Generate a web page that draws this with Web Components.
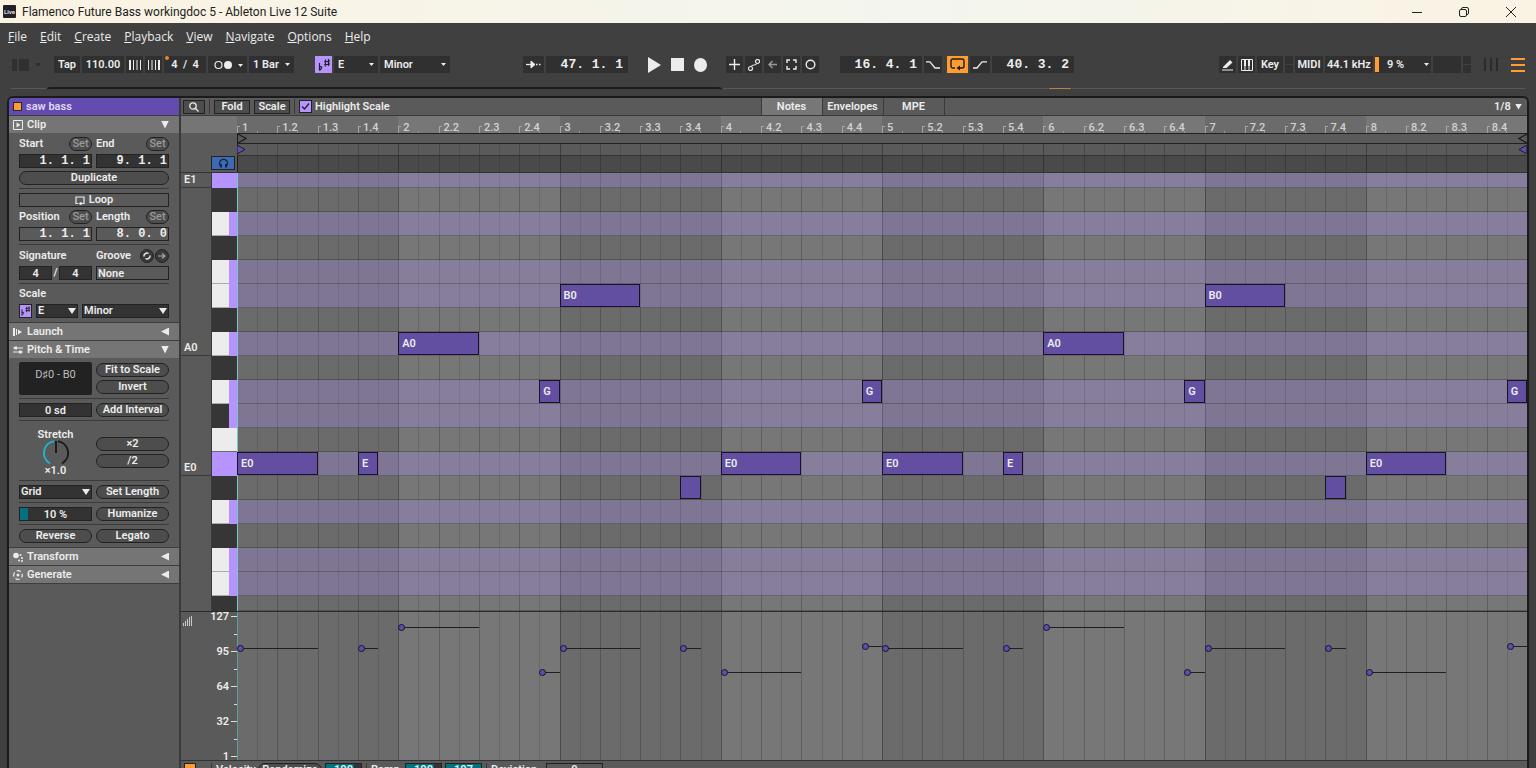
<!DOCTYPE html>
<html lang="en">
<head>
<meta charset="utf-8">
<title>Flamenco Future Bass workingdoc 5 - Ableton Live 12 Suite</title>
<style>
  body {
    margin: 0;
    height: 100vh;
    overflow: hidden;
    background: #404040;
    color: #ececec;
    font: 600 11px/14px Roboto, "Liberation Sans", sans-serif;
  }
</style>
</head>
<body>
<live-app></live-app>

<script>
// styles shared by every element that holds controls
const controls = `
  * { box-sizing: border-box; }
  button, input, select {
    margin: 0;
    padding: 0;
    border: 0;
    border-radius: 0;
    background: none;
    color: inherit;
    font: inherit;
    min-width: 0;
    appearance: none;
    outline: none;
  }
  svg { display: block; }
  svg:not([fill]) { fill: none; }
  svg:not([stroke]) { stroke: currentColor; }
  .time { font: 700 12px/12px "Liberation Mono", monospace; text-align: right; }
`

const scaleIcon = `
  <svg width="14" height="14" viewBox="0 0 14 14" stroke="#222" stroke-width="1.2">
    <path d="M2.500 5v7.500M2.500 9c3-1.500 3 1 0 3.500M8.500 1.500v7M11.500 1v7M7 4l6-1M7 6.800l6-1"/>
  </svg>`

class BaseElement extends HTMLElement {
  constructor() {
    super()
    this.attachShadow({ mode: 'open' })
  }

  connectedCallback() {
    this.shadowRoot.innerHTML = `<style>${controls}</style>${this.html}`
  }
}

class LiveApp extends BaseElement {
  get html() {
    return `
      <style>
        :host { display: flex; flex-direction: column; height: 100vh; }
        .overview {
          display: flex;
          height: 8px;
          margin: 15px 11px 0;
          gap: 1px;
        }
        .overview i { height: 1px; background: #585858; }
        .overview i:nth-child(1) { width: 35px; }
        .overview i:nth-child(2) {
          width: 675px;
          height: 3px;
          border-top: 2px solid #1c1c1c;
          border-radius: 3px 3px 0 0;
          margin-top: -1px;
          background: none;
        }
        .overview i:nth-child(3) { flex: 1; }
        .overview i:nth-child(4) { width: 22px; background: #b9863f; }
        .overview i:nth-child(5) { width: 453px; }
        main {
          flex: 1;
          min-height: 0;
          display: flex;
          margin: 0 7px;
          border: 2px solid #1b1b1b;
          border-bottom: 0;
          border-radius: 6px 6px 0 0;
          background: #5a5a5a;
          overflow: hidden;
        }
        note-editor { flex: 1; min-width: 0; }
      </style>
      <title-bar>Flamenco Future Bass workingdoc 5 - Ableton Live 12 Suite</title-bar>
      <menu-bar></menu-bar>
      <transport-bar></transport-bar>
      <div class="overview"><i></i><i></i><i></i><i></i><i></i></div>
      <main>
        <clip-panel></clip-panel>
        <note-editor></note-editor>
      </main>
    `
  }
}

class TitleBar extends BaseElement {
  get html() {
    return `
      <style>
        :host {
          display: flex;
          align-items: center;
          flex: none;
          height: 23px;
          padding: 0 2px 0 3px;
          background: linear-gradient(90deg, #fbf3e2, #f3f5ee 60%, #faf3e3);
          color: #222;
          font: 400 12px/16px Roboto, "Noto Sans", sans-serif;
        }
        .logo {
          width: 13px;
          height: 13px;
          margin-right: 6px;
          border-radius: 1px;
          background: #1f2028;
          color: #ddd;
          font: 700 6px/13px Roboto, sans-serif;
          text-align: center;
        }
        h1 { flex: 1; margin: 0; font: inherit; }
        button { width: 47px; height: 23px; display: grid; place-items: center; }
      </style>
      <span class="logo">Live</span>
      <h1><slot></slot></h1>
      <button aria-label="Minimize"><svg width="10" height="10"><path d="M0 5.500h10"/></svg></button>
      <button aria-label="Restore">
        <svg width="10" height="10"><rect x=".5" y="2.500" width="7" height="7" rx="1.500"/><path d="M2.500 2.500V2a1.500 1.500 0 0 1 1.500-1.500h4A1.500 1.500 0 0 1 9.500 2v4A1.500 1.500 0 0 1 8 7.500h-.5"/></svg>
      </button>
      <button aria-label="Close"><svg width="10" height="10"><path d="M0 0l10 10M10 0L0 10"/></svg></button>
    `
  }
}

class MenuBar extends BaseElement {
  get html() {
    const items = ['File', 'Edit', 'Create', 'Playback', 'View', 'Navigate', 'Options', 'Help']
    return `
      <style>
        :host {
          display: flex;
          flex: none;
          align-items: center;
          gap: 13px;
          height: 27px;
          padding-left: 8px;
          font: 400 12px/16px "Open Sans", "Noto Sans", sans-serif;
        }
        button::first-letter { text-decoration: underline; }
      </style>
      ${items.map(item => `<button>${item}</button>`).join('')}
    `
  }
}

class DropDown extends BaseElement {
  get html() {
    return `
      <style>
        :host { display: grid; align-items: center; }
        select, i { grid-area: 1 / 1; }
        select { width: 100%; height: 100%; padding-left: var(--indent, 4px); }
        i {
          justify-self: end;
          width: var(--arrow, 6px);
          height: var(--arrow-height, 4px);
          margin-right: var(--arrow-gap, 3px);
          background: currentColor;
          clip-path: polygon(0 0, 100% 0, 50% 100%);
          pointer-events: none;
        }
      </style>
      <select aria-label="${this.getAttribute('label')}"><option>${this.getAttribute('value')}</option></select>
      <i></i>
    `
  }
}

class TransportBar extends BaseElement {
  get html() {
    return `
      <style>
        :host {
          display: flex;
          flex: none;
          align-items: center;
          height: 17px;
          margin-top: 6px;
          padding: 0 11px 0 12px;
        }
        .group { display: flex; gap: 2px; }
        .group > * { height: 17px; background: #303030; }
        .group > button, .group > label { display: grid; place-items: center; }
        .group > input { text-align: center; }
        .group > .time { width: 82px; padding-right: 5px; font-size: 13px; text-align: right; }
        .group > .bare { background: none; }
        drop-down { --arrow: 5px; --arrow-height: 3px; --arrow-gap: 4px; }
        .signature { position: relative; }
        .signature::before {
          content: '';
          position: absolute;
          top: 0;
          left: 1px;
          width: 4px;
          height: 4px;
          border-radius: 50%;
          background: #e8862c;
        }
        .signature input { width: 42px; text-align: center; }
        .group > .on { background: #b594ff; }
        .group > .loop { background: #ff9d33; color: #1d1d1d; margin: 0 0 0 3px; }
        .group > .split { width: 8px; background: linear-gradient(#303030 8px, #404040 8px, #404040 9px, #303030 9px); }
        .cpu { display: flex; align-items: center; width: 56px; }
        .cpu i { width: 4px; height: 15px; margin-right: 8px; background: #ff9d33; }
        .cpu drop-down { flex: 1; height: 17px; --indent: 0px; --arrow-gap: 2px; }
      </style>
      <div class="group">
        <button class="bare" aria-label="Browser"><svg width="40" height="17" stroke="none" fill="#303030"><path d="M0 3h5v12H0zM7 3h10v12H7zM23 7h6l-3 4z"/></svg></button>
        <button style="width:26px">Tap</button>
        <input style="width:42px" value="110.00" aria-label="Tempo">
        <button style="width:17px" aria-label="Nudge down"><svg width="12" height="10"><path stroke-width="2" d="M1 0v10"/><path d="M4.500 0v10M8 0v10M11.500 0v10"/></svg></button>
        <button style="width:17px" aria-label="Nudge up"><svg width="12" height="10"><path d="M.5 0v10M4 0v10M7.500 0v10"/><path stroke-width="2" d="M11 0v10"/></svg></button>
        <label class="signature"><input value="4  /  4" aria-label="Time signature"></label>
        <button style="width:39px" aria-label="Metronome"><svg width="30" height="10"><circle cx="5.500" cy="5" r="3.500" stroke-width="1.200"/><circle cx="15" cy="5" r="4" fill="currentColor" stroke="none"/><path d="M25 4h5l-2.500 3z" fill="currentColor" stroke="none"/></svg></button>
        <drop-down style="width:45px" label="Quantization" value="1 Bar"></drop-down>
      </div>
      <div class="group" style="margin-left:21px">
        <button class="on" style="width:17px" aria-label="Scale mode">${scaleIcon}</button>
        <drop-down style="width:44px" label="Root note" value="E"></drop-down>
        <drop-down style="width:70px" label="Scale name" value="Minor"></drop-down>
      </div>
      <div class="group" style="margin-left:73px">
        <button style="width:21px" aria-label="Follow"><svg width="15" height="9"><path stroke-width="1.300" d="M0 4.500h7"/><path d="M5 1l4 3.500L5 8z" fill="currentColor"/><path stroke-width="1.500" stroke-dasharray="1.500 1.500" d="M10 4.500h5"/></svg></button>
        <input class="time" value="47. 1. 1" aria-label="Arrangement position">
      </div>
      <div class="group" style="margin-left:20px;gap:10px">
        <button class="bare" aria-label="Play"><svg width="13" height="16" stroke="none" fill="currentColor"><path d="M0 0l13 8-13 8z"/></svg></button>
        <button class="bare" aria-label="Stop"><svg width="13" height="13" stroke="none" fill="currentColor"><path d="M0 0h13v13H0z"/></svg></button>
        <button class="bare" aria-label="Record"><svg width="13" height="14" stroke="none" fill="currentColor"><ellipse cx="6.500" cy="7" rx="6.500" ry="7"/></svg></button>
      </div>
      <div class="group" style="margin-left:19px">
        <button style="width:17px" aria-label="Overdub"><svg width="11" height="11"><path stroke-width="1.400" d="M5.500 0v11M0 5.500h11"/></svg></button>
        <button style="width:17px" aria-label="Automation arm"><svg width="12" height="12" stroke-width="1.200"><circle cx="2.500" cy="9.500" r="2"/><circle cx="9.500" cy="2.500" r="2"/><path d="M3.500 7.500c.5-3 4.500 0 5-3"/></svg></button>
        <button style="width:17px" aria-label="Re-enable automation"><svg width="9" height="9" stroke="#999" stroke-width="1.500"><path d="M9 4.500H1M4.500 1L1 4.500 4.500 8"/></svg></button>
        <button style="width:17px" aria-label="Capture"><svg width="11" height="11" stroke-width="1.400"><path d="M1 4V1h3M7 1h3v3M10 7v3H7M4 10H1V7"/></svg></button>
        <button style="width:17px" aria-label="Session record"><svg width="11" height="11" stroke-width="1.400"><circle cx="5.500" cy="5.500" r="4.300"/></svg></button>
      </div>
      <div class="group" style="margin-left:21px">
        <input class="time" value="16. 4. 1" aria-label="Loop start">
        <button style="width:18px" aria-label="Punch in"><svg width="14" height="8" stroke-width="1.300"><path d="M0 .8h4L9 7h5"/></svg></button>
        <button class="loop" style="width:21px" aria-label="Loop"><svg width="15" height="13" stroke-width="1.400"><path d="M5 10H3a2 2 0 0 1-2-2V3a2 2 0 0 1 2-2h9a2 2 0 0 1 2 2v5a2 2 0 0 1-2 2H8"/><path d="M10 7.500v5L6.500 10z" fill="currentColor" stroke="none"/></svg></button>
        <button style="width:20px" aria-label="Punch out"><svg width="14" height="8" stroke-width="1.300"><path d="M0 7h4L9 .8h5"/></svg></button>
        <input class="time" value="40. 3. 2" aria-label="Loop length">
      </div>
      <div class="group" style="margin-left:auto">
        <button style="width:17px" aria-label="Draw mode"><svg width="12" height="12"><path d="M1 8l7-7 2.500 2.500-6 5.500H1z" fill="currentColor" stroke="none"/><path d="M0 11h11"/></svg></button>
        <button style="width:17px" aria-label="Computer keyboard"><svg width="12" height="12"><path d="M.5.5h11v11H.5zM4 0v12M8 0v12" /><path stroke-width="2" d="M4 0v7M8 0v7"/></svg></button>
        <button style="width:26px">Key</button>
        <span class="split"></span>
        <button style="width:28px">MIDI</button>
        <button style="width:48px">44.1 kHz</button>
        <div class="cpu"><i></i><drop-down label="CPU load" value="9 %"></drop-down></div>
        <span style="width:28px"></span>
        <span class="split"></span>
        <button class="bare" style="width:36px" aria-label="Session view"><svg width="14" height="13" stroke="#2b2b2b" stroke-width="2"><path d="M1 0v13M7 0v13M13 0v13"/></svg></button>
        <button class="bare" style="width:14px" aria-label="Arrangement view"><svg width="14" height="14" stroke="#ff9d33" stroke-width="2"><path d="M0 1h14M0 7h14M0 13h14"/></svg></button>
      </div>
    `
  }
}

class PanelSection extends BaseElement {
  get html() {
    const open = this.hasAttribute('open')
    return `
      <style>
        :host { display: block; }
        header {
          display: flex;
          align-items: center;
          gap: 4px;
          height: 18px;
          padding: 0 10px 0 4px;
          border-top: 1px solid #3d3d3d;
          background: #757575;
        }
        h2 { flex: 1; margin: 0; font: inherit; }
        header button { width: 8px; height: 8px; background: #ececec; clip-path: polygon(0 50%, 100% 0, 100% 100%); }
        header .open { clip-path: polygon(0 0, 100% 0, 50% 100%); }
        .body { display: ${open ? 'block' : 'none'}; padding: 1px 10px 4px; }
      </style>
      <header>
        <slot name="icon"></slot>
        <h2>${this.getAttribute('heading')}</h2>
        <button class="${open ? 'open' : ''}" aria-label="Toggle ${this.getAttribute('heading')}"></button>
      </header>
      <div class="body"><slot></slot></div>
    `
  }
}

class ClipPanel extends BaseElement {
  get html() {
    return `
      <style>
        :host {
          flex: none;
          display: block;
          width: 172px;
          border-right: 2px solid #3a3a3a;
        }
        .name {
          display: flex;
          align-items: center;
          gap: 4px;
          height: 17px;
          padding-left: 4px;
          background: #634bb0;
          color: #e0d8f5;
        }
        .name i { width: 9px; height: 9px; border: 1px solid #2a2a2a; background: #ff9d33; }
        .row { display: grid; grid-template-columns: 1fr 1fr; column-gap: 4px; align-items: center; height: 14px; }
        .labels { height: 20px; }
        .tall { height: 21px; }
        .labels span, .labels > label { display: flex; justify-content: space-between; align-items: center; }
        .row > input, .row > button, .full, .sig input {
          width: 100%;
          height: 14px;
          border: 1px solid #222;
        }
        input { background: #333; text-align: center; line-height: 12px; }
        input.time { padding-right: 1px; text-align: right; }
        input.flat, .loop { background: #5a5a5a; }
        .pill, .set { border: 1px solid #222; border-radius: 7px; background: #4d4d4d; line-height: 12px; }
        .full { display: flex; align-items: center; justify-content: center; gap: 4px; }
        .set { width: 23px; height: 14px; color: #999; font-weight: 500; }
        .round { width: 14px; height: 14px; display: grid; place-items: center; border: 1px solid #222; border-radius: 50%; background: #3a3a3a; }
        .groove-buttons { display: flex; gap: 1px; }
        hr { height: 1px; margin: 3px 0 4px; border: 0; background: #3a3a3a; }
        hr.tight { margin-bottom: 0; }
        drop-down {
          height: 14px;
          border: 1px solid #222;
          background: #333;
          line-height: 12px;
          --indent: 1px;
          --arrow: 8px;
          --arrow-height: 6px;
          --arrow-gap: 1px;
        }
        .sig { display: flex; align-items: center; gap: 1px; }
        .sig input { flex: 1; }
        .scale { display: grid; grid-template-columns: 13px 42px 1fr; column-gap: 4px; }
        .scale button { height: 14px; border: 1px solid #222; background: #b594ff; }
        .scale svg { width: 11px; height: 12px; }
        .range {
          display: grid;
          grid-template-columns: 1fr 1fr;
          column-gap: 4px;
          align-items: center;
          padding-top: 3px;
        }
        .range output { height: 33px; padding-top: 6px; border-radius: 2px; background: #222; color: #bdbdbd; text-align: center; font-weight: 400; }
        .stack { display: grid; gap: 3px; }
        .stack button { height: 14px; }
        .stretch { display: grid; grid-template-columns: 1fr 1fr; column-gap: 4px; align-items: center; height: 55px; }
        .dial { display: grid; justify-items: center; grid-template-rows: 14px 22px 14px; align-items: center; }
        .percent { background: linear-gradient(90deg, #04717f 8px, #333 8px); }
        .end { border-bottom: 1px solid #3d3d3d; }
      </style>
      <div class="name"><i></i>saw bass</div>
      <panel-section heading="Clip" open>
        <svg slot="icon" width="10" height="10"><path d="M.5.5h9v9h-9z"/><path d="M3.500 2.500l4 2.500-4 2.500z" fill="currentColor" stroke="none"/></svg>
        <div class="row labels">
          <span><label for="start">Start</label><button class="set">Set</button></span>
          <span><label for="end">End</label><button class="set">Set</button></span>
        </div>
        <div class="row">
          <input id="start" class="time" value="1. 1. 1">
          <input id="end" class="time" value="9. 1. 1">
        </div>
        <button class="pill full" style="margin-top:3px">Duplicate</button>
        <hr>
        <button class="loop full"><svg width="10" height="9"><path stroke-width="1.200" d="M3 7.500H1V1h8v6.500H6"/><path d="M6.500 5.500v4l-3-2z" fill="currentColor" stroke="none"/></svg>Loop</button>
        <div class="row labels">
          <span><label for="position">Position</label><button class="set">Set</button></span>
          <span><label for="length">Length</label><button class="set">Set</button></span>
        </div>
        <div class="row">
          <input id="position" class="time flat" value="1. 1. 1">
          <input id="length" class="time flat" value="8. 0. 0">
        </div>
        <hr class="tight">
        <div class="row labels tall">
          <label for="numerator">Signature</label>
          <span><label for="groove">Groove</label>
            <span class="groove-buttons">
              <button class="round" aria-label="Hot-swap groove"><svg width="8" height="8" stroke-width="1.400"><path d="M1 4.500A3 3 0 0 1 5.500 1.500M7 3.500A3 3 0 0 1 2.500 6.500"/></svg></button>
              <button class="round" aria-label="Commit groove"><svg width="8" height="8" stroke="#aaa" stroke-width="1.200"><path d="M0 4h7M4 1.500L7 4 4 6.500"/></svg></button>
            </span>
          </span>
        </div>
        <div class="row">
          <div class="sig"><input id="numerator" value="4">/<input value="4" aria-label="Denominator"></div>
          <input id="groove" class="flat" style="text-align:left;padding-left:1px" value="None">
        </div>
        <hr class="tight">
        <div class="row labels">Scale</div>
        <div class="scale">
          <button aria-label="Use scale">${scaleIcon}</button>
          <drop-down label="Root note" value="E"></drop-down>
          <drop-down label="Scale name" value="Minor"></drop-down>
        </div>
      </panel-section>
      <panel-section heading="Launch">
        <svg slot="icon" width="10" height="10" fill="currentColor" stroke="none"><path d="M0 1h2v8H0zM3 2h1v6H3zM5 2.500L9 5 5 7.500z"/></svg>
      </panel-section>
      <panel-section heading="Pitch &amp; Time" open>
        <svg slot="icon" width="10" height="10" stroke-width="1.200"><path d="M0 3h10M0 7h10"/><path d="M1.500 1.500h2.500v3H1.500zM6 5.500h2.500v3H6z" fill="currentColor" stroke="none"/></svg>
        <div class="range">
          <output>D♯0 - B0</output>
          <div class="stack"><button class="pill">Fit to Scale</button><button class="pill">Invert</button></div>
        </div>
        <hr>
        <div class="row"><input value="0 sd" aria-label="Transpose"><button class="pill">Add Interval</button></div>
        <hr>
        <div class="stretch">
          <div class="dial">
            <span>Stretch</span>
            <svg width="28" height="26" stroke-width="2"><path stroke="#1c1c1c" d="M16 1.200A12 12 0 0 1 20 23.500"/><path stroke="#1fb4c8" d="M12 1.200A12 12 0 0 0 8 23.500"/><path stroke="#1c1c1c" d="M14 1v12"/></svg>
            <span>×1.0</span>
          </div>
          <div class="stack"><button class="pill">×2</button><button class="pill">/2</button></div>
        </div>
        <hr style="margin-top:0">
        <div class="row"><drop-down label="Quantize to" value="Grid"></drop-down><button class="pill">Set Length</button></div>
        <hr>
        <div class="row"><input class="percent" value="10 %" aria-label="Humanize amount"><button class="pill">Humanize</button></div>
        <hr>
        <div class="row"><button class="pill">Reverse</button><button class="pill">Legato</button></div>
      </panel-section>
      <panel-section heading="Transform">
        <svg slot="icon" width="10" height="10" fill="currentColor" stroke="none"><circle cx="3" cy="3.500" r="2.800"/><circle cx="7.500" cy="3" r="1"/><circle cx="9" cy="6" r="1"/><circle cx="6" cy="8.500" r="1"/><circle cx="9" cy="9" r="1"/></svg>
      </panel-section>
      <panel-section class="end" heading="Generate">
        <svg slot="icon" width="10" height="10" stroke-width="1.200"><circle cx="5" cy="5" r="4.300" stroke-dasharray="4.500 2.250" stroke-dashoffset="2"/><circle cx="5" cy="5" r="1.500" fill="currentColor" stroke="none"/></svg>
      </panel-section>
    `
  }
}

// eight bars of eighth-note cells, stretched over whatever holds it
class TimeGrid extends BaseElement {
  get html() {
    const bar = `<div>${'<i></i>'.repeat(8)}</div>`
    return `
      <style>
        :host { display: grid; grid-template-columns: repeat(8, minmax(0, 1fr)); }
        div { display: grid; grid-template-columns: repeat(8, minmax(0, 1fr)); background: var(--even-bar, none); }
        div:nth-of-type(odd) { background: var(--odd-bar, none); }
        i { border-left: 1px solid rgba(0, 0, 0, .12); }
        i:nth-child(odd) { border-color: rgba(0, 0, 0, .2); }
        i:first-child { border-color: rgba(0, 0, 0, .32); }
        div:first-of-type i:first-child { border-color: var(--playhead, #1d1d1d); }
      </style>
      ${bar.repeat(8)}
    `
  }
}

// start and length in eighths, row counted from the top of the roll
const notes = [
  { name: 'E0', row: 13, start: 0, length: 4, velocity: 98 },
  { name: 'E', row: 13, start: 6, length: 1, velocity: 98 },
  { name: 'A0', row: 8, start: 8, length: 4, velocity: 117 },
  { name: 'G', row: 10, start: 15, length: 1, velocity: 77 },
  { name: 'B0', row: 6, start: 16, length: 4, velocity: 98 },
  { name: '', row: 14, start: 22, length: 1, velocity: 98 },
  { name: 'E0', row: 13, start: 24, length: 4, velocity: 77 },
  { name: 'G', row: 10, start: 31, length: 1, velocity: 100 },
  { name: 'E0', row: 13, start: 32, length: 4, velocity: 98 },
  { name: 'E', row: 13, start: 38, length: 1, velocity: 98 },
  { name: 'A0', row: 8, start: 40, length: 4, velocity: 117 },
  { name: 'G', row: 10, start: 47, length: 1, velocity: 77 },
  { name: 'B0', row: 6, start: 48, length: 4, velocity: 98 },
  { name: '', row: 14, start: 54, length: 1, velocity: 98 },
  { name: 'E0', row: 13, start: 56, length: 4, velocity: 77 },
  { name: 'G', row: 10, start: 63, length: 1, velocity: 100 }
]

// top to bottom, E1 down to A#-1
const keys = [
  'root', 'black', 'white scale', 'black', 'white scale', 'white scale', 'black', 'white scale',
  'black', 'white scale', 'black scale', 'white', 'root', 'black', 'white scale', 'black',
  'white scale', 'white scale', 'black'
]
const keyLabels = { 0: 'E1', 7: 'A0', 12: 'E0' }

class PianoRoll extends BaseElement {
  get html() {
    return `
      <style>
        :host {
          display: grid;
          grid-template-columns: 31px 25px 1fr;
          border-bottom: 1px solid #2b2b2b;
        }
        .rows { display: grid; grid-template-rows: 15px repeat(17, 24px) 15px; }
        .labels { border-right: 1px solid #3a3a3a; }
        .labels span { display: flex; align-items: flex-end; padding-left: 3px; }
        .labels span.named { border-bottom: 1px solid #3a3a3a; }
        .keys i { border-bottom: 1px solid #6a6a6a; }
        .keys .white { background: #ececec; }
        .keys .black { background: #363636; border-color: #363636; }
        .keys .root { background: #b594ff; border-color: #b594ff; }
        .keys .scale { border-right: 8px solid #b594ff; border-bottom: 0; box-shadow: inset 0 -1px #aaa; }
        .keys .black.scale { box-shadow: none; }
        .canvas { display: grid; }
        .canvas > * { grid-area: 1 / 1; }
        .lanes i { border-bottom: 1px solid rgba(0, 0, 0, .22); }
        .lanes .scale, .lanes .root { background: rgba(181, 148, 255, .27); }
        time-grid { --odd-bar: #6b6b6b; --even-bar: #777; }
        .notes { grid-template-columns: repeat(64, minmax(0, 1fr)); box-shadow: inset 1px 0 #79c8cf; }
        .note {
          margin-bottom: 1px;
          padding-left: 3px;
          border: 1px solid #171321;
          background: #634fa2;
          text-align: left;
          overflow: hidden;
        }
      </style>
      <div class="rows labels">
        ${keys.map((key, i) => `<span class="${keyLabels[i] ? 'named' : ''}">${keyLabels[i] || ''}</span>`).join('')}
      </div>
      <div class="rows keys">${keys.map(key => `<i class="${key}"></i>`).join('')}</div>
      <div class="canvas">
        <time-grid></time-grid>
        <div class="rows lanes">${keys.map(key => `<i class="${key}"></i>`).join('')}</div>
        <div class="rows notes">
          ${notes.map(note => `
            <button class="note" style="grid-area: ${note.row} / ${note.start + 1} / span 1 / span ${note.length}">${note.name}</button>
          `).join('')}
        </div>
      </div>
    `
  }
}

class VelocityLane extends BaseElement {
  get html() {
    const ticks = ['127', '', '95', '', '64', '', '32', '', '1']
    return `
      <style>
        :host {
          display: grid;
          grid-template-columns: 56px 1fr;
          height: 149px;
          border-bottom: 1px solid #333;
        }
        aside { display: flex; padding: 4px 0 3px 2px; justify-content: space-between; }
        .ticks { display: flex; flex-direction: column; justify-content: space-between; }
        .ticks span {
          display: flex;
          align-items: center;
          justify-content: flex-end;
          gap: 2px;
          height: 1px;
        }
        .ticks span::after { content: ''; width: 3px; height: 1px; background: #ddd; }
        .ticks .major::after { width: 6px; }
        .lane { display: grid; }
        .lane > * { grid-area: 1 / 1; }
        time-grid { --odd-bar: #6b6b6b; --even-bar: #777; --playhead: #5c9da1; }
        .stalks { position: relative; margin: 4px 0; }
        .stalks i { position: absolute; height: 1px; background: #1f1f1f; }
        .stalks i::before {
          content: '';
          position: absolute;
          top: -3px;
          left: 0;
          width: 5px;
          height: 5px;
          border: 1px solid #17131f;
          border-radius: 50%;
          background: #634bb0;
        }
      </style>
      <aside>
        <svg width="9" height="10" stroke="#c8c8c8"><path d="M.5 7v3M2.500 5v5M4.500 3v7M6.500 1v9M8.500 0v10"/></svg>
        <div class="ticks">${ticks.map(tick => `<span class="${tick ? 'major' : ''}">${tick}</span>`).join('')}</div>
      </aside>
      <div class="lane">
        <time-grid></time-grid>
        <div class="stalks">
          ${notes.map(note => `
            <i style="left: ${note.start / 64 * 100}%; width: ${note.length / 64 * 100}%; top: ${(127 - note.velocity) / 126 * 100}%"></i>
          `).join('')}
        </div>
      </div>
    `
  }
}

class BeatRuler extends BaseElement {
  get html() {
    let labels = ''
    for (let bar = 1; bar <= 8; bar++) {
      for (let beat = 1; beat <= 4; beat++) {
        const shade = bar % 2 ? 'odd' : 'even'
        labels += `<span class="${shade}">${beat === 1 ? bar : `${bar}.${beat}`}</span>`
      }
    }
    return `
      <style>
        :host { display: grid; grid-template-columns: repeat(32, minmax(0, 1fr)); height: 17px; color: #d2d2d2; font-weight: 500; }
        span {
          display: flex;
          align-items: flex-end;
          gap: 2px;
          height: 17px;
          line-height: 11px;
          background: linear-gradient(#999, #999) 50% 100% / 1px 2px no-repeat #777;
        }
        span::before { content: ''; width: 2px; height: 6px; border: solid #a5a5a5; border-width: 1px 0 0 1px; }
        .odd { background-color: #6b6b6b; }
      </style>
      ${labels}
    `
  }
}

class NoteEditor extends BaseElement {
  get html() {
    return `
      <style>
        :host { display: block; }
        .toolbar {
          display: grid;
          grid-template-columns: 1fr auto 1fr;
          height: 18px;
          padding-right: 3px;
          border-bottom: 1px solid #3a3a3a;
        }
        .tools { display: flex; align-items: center; gap: 4px; padding-left: 2px; }
        .tools button { width: 36px; height: 14px; border: 1px solid #222; background: #4d4d4d; line-height: 12px; }
        .tools .search { width: 22px; display: grid; place-items: center; }
        .tools hr { width: 1px; height: 15px; margin: 0; border: 0; background: #3a3a3a; }
        .tools label { display: flex; align-items: center; gap: 3px; }
        .check { display: grid; }
        .check > * { grid-area: 1 / 1; width: 13px; height: 13px; }
        .check input { border: 1px solid #222; background: #b594ff; }
        .check svg { pointer-events: none; }
        nav { display: flex; border-left: 1px solid #3a3a3a; }
        nav button { width: 61px; border-right: 1px solid #3a3a3a; }
        nav .active { background: #777; }
        .toolbar drop-down { justify-self: end; width: 34px; --arrow: 7px; --arrow-height: 6px; --arrow-gap: 2px; }
        .head { display: grid; grid-template-columns: 56px 1fr; border-bottom: 1px solid #333; }
        .corner { display: flex; flex-direction: column; }
        .corner::before { content: ''; height: 17px; background: #757575; }
        .corner button { display: grid; place-items: center; width: 24px; height: 14px; margin: auto 2px 2px auto; border: 1px solid #222; background: #3d69b5; color: #16243f; }
        .bar { display: flex; align-items: center; border-top: 1px solid #222; height: 10px; justify-content: space-between; }
        .loop-bar { border-left: 1px solid #1d1d1d; }
        .markers, .scrub { display: grid; border-top: 1px solid #222; }
        .markers { height: 12px; }
        .markers > * { grid-area: 1 / 1; }
        .markers div { display: flex; justify-content: space-between; align-items: center; }
        .scrub { height: 17px; background: #4a4a4a; border-color: #333; }
        .footer { display: flex; align-items: center; gap: 3px; height: 18px; padding: 0 3px; }
        .footer button, .footer input { height: 14px; border: 1px solid #222; }
        .footer input { width: 37px; text-align: center; background: linear-gradient(90deg, #04717f 80%, #333 80%); }
        .footer hr { width: 1px; height: 14px; margin: 0 1px; border: 0; background: #3a3a3a; }
      </style>
      <div class="toolbar">
        <div class="tools">
          <button class="search" aria-label="Search"><svg width="10" height="10" stroke-width="1.300"><circle cx="4" cy="4" r="3.200"/><path d="M6.500 6.500L9.500 9.500"/></svg></button>
          <hr>
          <button>Fold</button>
          <button>Scale</button>
          <hr>
          <label><span class="check"><input type="checkbox" checked><svg viewBox="0 0 13 13" stroke="#222" stroke-width="1.300"><path d="M3 6.500L5.500 9 10 3.500"/></svg></span>Highlight Scale</label>
        </div>
        <nav><button class="active">Notes</button><button>Envelopes</button><button>MPE</button></nav>
        <drop-down label="Grid" value="1/8"></drop-down>
      </div>
      <div class="head">
        <div class="corner">
          <button aria-label="Preview notes"><svg width="11" height="10" stroke-width="1.300"><path d="M3 8.500A4 4 0 1 1 8 8.500"/><path stroke-width="2" d="M3 6v3.500M8 6v3.500"/></svg></button>
        </div>
        <div>
          <beat-ruler></beat-ruler>
          <div class="bar loop-bar">
            <svg width="9" height="9" stroke="#1d1d1d" stroke-width="1.200"><path d="M0 0l8 4.500L0 9"/></svg>
            <svg width="9" height="9" stroke="#1d1d1d" stroke-width="1.200"><path d="M9 0L1 4.500 9 9"/></svg>
          </div>
          <div class="markers">
            <time-grid></time-grid>
            <div>
              <svg width="9" height="9" fill="#634bb0" stroke="#1d1d1d"><path d="M0 0l8 4.500L0 9z"/></svg>
              <svg width="9" height="9" fill="#634bb0" stroke="#1d1d1d"><path d="M9 0L1 4.500 9 9z"/></svg>
            </div>
          </div>
          <div class="scrub"><time-grid></time-grid></div>
        </div>
      </div>
      <piano-roll></piano-roll>
      <velocity-lane></velocity-lane>
      <div class="footer">
        <button style="width:12px;background:#ff9d33" aria-label="Velocity lane"></button>
        <svg width="8" height="8" fill="currentColor" stroke="none"><path d="M0 2h8L4 8z"/></svg>
        <hr>
        <label for="randomize" style="width:39px">Velocity</label>
        <button style="width:64px;border-radius:7px;background:#4d4d4d;line-height:12px">Randomize</button>
        <input id="randomize" value="100">
        <hr>
        <label for="ramp" style="width:31px">Ramp</label>
        <input id="ramp" value="100">
        <input value="107" aria-label="Ramp end" style="background:#04717f">
        <hr>
        <label for="deviation" style="width:52px">Deviation</label>
        <input id="deviation" value="0" style="width:57px;background:#5a5a5a">
      </div>
    `
  }
}

customElements.define('drop-down', DropDown)
customElements.define('time-grid', TimeGrid)
customElements.define('panel-section', PanelSection)
customElements.define('title-bar', TitleBar)
customElements.define('menu-bar', MenuBar)
customElements.define('transport-bar', TransportBar)
customElements.define('clip-panel', ClipPanel)
customElements.define('beat-ruler', BeatRuler)
customElements.define('piano-roll', PianoRoll)
customElements.define('velocity-lane', VelocityLane)
customElements.define('note-editor', NoteEditor)
customElements.define('live-app', LiveApp)
</script>
</body>
</html>
